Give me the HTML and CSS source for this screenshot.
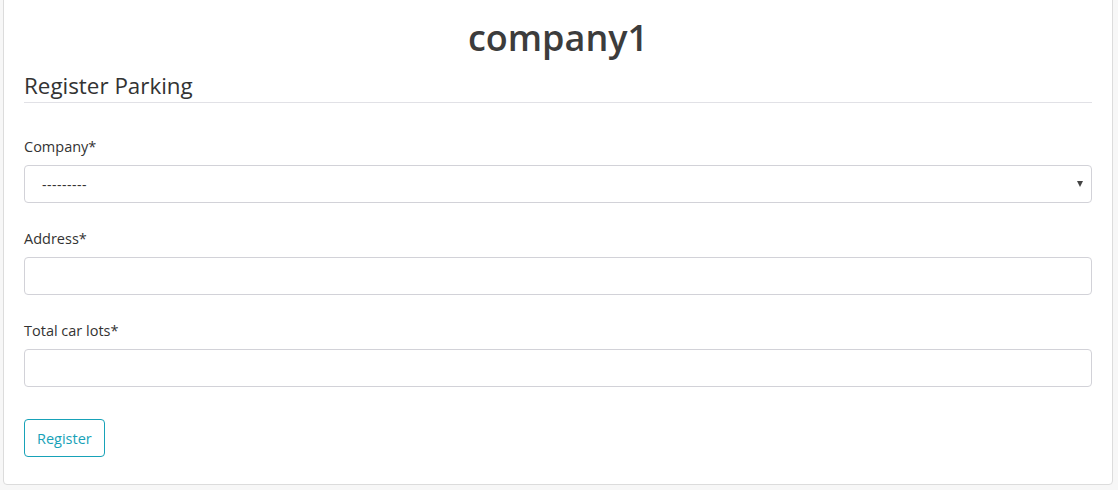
FILE: index.html
```html
<!DOCTYPE html>
<html>
<head>
<meta charset="utf-8">
<link rel="stylesheet" href="styles.css">
</head>
<body>
<div class="card">
  <h1 class="title">company1</h1>
  <h2 class="section">Register Parking</h2>
  <form class="form">
    <div class="group">
      <label class="label">Company*</label>
      <div class="select">
        <span class="select-text">---------</span>
        <span class="caret"></span>
      </div>
    </div>
    <div class="group">
      <label class="label">Address*</label>
      <input class="input" type="text">
    </div>
    <div class="group">
      <label class="label">Total car lots*</label>
      <input class="input" type="text">
    </div>
    <button class="btn" type="button">Register</button>
  </form>
</div>
</body>
</html>
```
FILE: styles.css
```css
html, body {
  margin: 0;
  padding: 0;
  background: #f7f7f7;
  font-family: "Open Sans", "Noto Sans", sans-serif;
  color: #333;
}
.card {
  margin: -6px 5px 0 3px;
  height: 491px;
  box-sizing: border-box;
  background: #fff;
  border: 1px solid #dcdcdc;
  border-radius: 4px;
  padding: 6px 20px 0 20px;
}
.title {
  margin: 0;
  padding-top: 13px;
  text-align: center;
  font-size: 36px;
  line-height: 48px;
  font-weight: 600;
  color: #3c3c3c;
}
.section {
  margin: 5px 0 0 0;
  font-size: 22.4px;
  font-weight: 400;
  line-height: 32px;
  padding: 3px 0 0 0;
  border-bottom: 1px solid #e1e1e6;
  color: #333;
}
.form {
  padding-top: 30px;
  display: flex;
  flex-direction: column;
  gap: 22px;
}
.group {
  display: flex;
  flex-direction: column;
  gap: 6px;
}
.label {
  font-size: 14.5px;
  line-height: 24px;
  padding-top: 2px;
  color: #333;
}
.select, .input {
  box-sizing: border-box;
  height: 38px;
  width: 100%;
  border: 1px solid #d2d2d8;
  border-radius: 4px;
  background: #fff;
  font: inherit;
}
.select {
  display: flex;
  align-items: center;
  justify-content: space-between;
  padding: 0 8px 0 17px;
}
.select-text {
  font-size: 14px;
  color: #333;
  letter-spacing: 0.5px;
}
.caret {
  width: 0;
  height: 0;
  border-left: 3.5px solid transparent;
  border-right: 3.5px solid transparent;
  border-top: 6px solid #444;
}
.btn {
  align-self: flex-start;
  margin-top: 10px;
  height: 38px;
  padding: 0 12px;
  background: #fff;
  border: 1px solid #17a2b8;
  border-radius: 4px;
  color: #17a2b8;
  font-family: inherit;
  font-size: 14.5px;
}
```
